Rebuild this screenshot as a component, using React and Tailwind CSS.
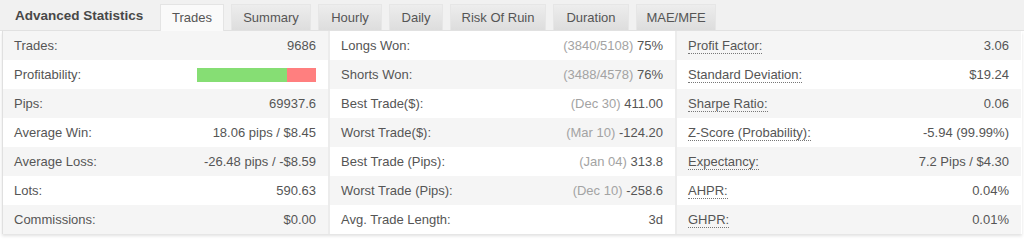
import React from 'react';

const tabs = [
  { name: 'Trades', w: 'w-[64px]', active: true },
  { name: 'Summary', w: 'w-[80px]' },
  { name: 'Hourly', w: 'w-[64px]' },
  { name: 'Daily', w: 'w-[54px]' },
  { name: 'Risk Of Ruin', w: 'w-[96px]' },
  { name: 'Duration', w: 'w-[76px]' },
  { name: 'MAE/MFE', w: 'w-[80px]' },
];

const col1 = [
  ['Trades:', '9686'],
  ['Profitability:', 'bar'],
  ['Pips:', '69937.6'],
  ['Average Win:', '18.06 pips / $8.45'],
  ['Average Loss:', '-26.48 pips / -$8.59'],
  ['Lots:', '590.63'],
  ['Commissions:', '$0.00'],
];

const col2 = [
  ['Longs Won:', '(3840/5108)', '75%'],
  ['Shorts Won:', '(3488/4578)', '76%'],
  ['Best Trade($):', '(Dec 30)', '411.00'],
  ['Worst Trade($):', '(Mar 10)', '-124.20'],
  ['Best Trade (Pips):', '(Jan 04)', '313.8'],
  ['Worst Trade (Pips):', '(Dec 10)', '-258.6'],
  ['Avg. Trade Length:', '', '3d'],
];

const col3 = [
  ['Profit Factor:', '3.06'],
  ['Standard Deviation:', '$19.24'],
  ['Sharpe Ratio:', '0.06'],
  ['Z-Score (Probability):', '-5.94 (99.99%)'],
  ['Expectancy:', '7.2 Pips / $4.30'],
  ['AHPR:', '0.04%'],
  ['GHPR:', '0.01%'],
];

function Row({ shade, children }) {
  return (
    <div className={`h-[29px] flex items-center justify-between pl-[11px] pr-[12px] ${shade ? 'bg-[#f5f5f5]' : 'bg-white'}`}>
      {children}
    </div>
  );
}

export default function App() {
  return (
    <div className="w-[1024px] h-[243px] bg-white font-['Liberation_Sans',sans-serif] text-[13px] text-[#555]">
      {/* header with tabs */}
      <div className="h-[31px] bg-[#f1f1f1] border-b border-[#e2e2e2] flex items-end">
        <div className="w-[160px] self-center pl-[15px] pt-[2px] font-bold text-[13.5px] text-[#484848]">Advanced Statistics</div>
        <div className="flex items-end gap-[7px] -mb-px">
          {tabs.map((t) =>
            t.active ? (
              <div key={t.name} className={`${t.w} h-[27px] flex items-center justify-center bg-[#fafafa] border border-b-0 border-[#e4e4e4] text-[#555] pb-[1px]`}>
                {t.name}
              </div>
            ) : (
              <div key={t.name} className={`${t.w} h-[26px] mb-px flex items-center justify-center bg-gradient-to-b from-[#ededed] to-[#dddddd] border border-b-0 border-[#e6e6e6] text-[#555]`}>
                {t.name}
              </div>
            )
          )}
        </div>
      </div>

      {/* stats panel */}
      <div className="mx-[2px] grid grid-cols-[327px_347px_344px] border-l border-[#e0e0e0] shadow-[0_2px_3px_rgba(0,0,0,0.12)]">
        <div className="border-r-[2px] border-[#ececec]">
          {col1.map(([k, v], i) => (
            <Row key={k} shade={i % 2 === 0}>
              <span>{k}</span>
              {v === 'bar' ? (
                <div className="flex w-[119px] h-[14px]">
                  <div className="w-[90px] bg-[#86de74]"></div>
                  <div className="flex-1 bg-[#ff7f7f]"></div>
                </div>
              ) : (
                <span>{v}</span>
              )}
            </Row>
          ))}
        </div>
        <div className="border-r-[2px] border-[#ececec]">
          {col2.map(([k, p, v], i) => (
            <Row key={k} shade={i % 2 === 1}>
              <span>{k}</span>
              <span>
                {p && <span className="text-[#a3a3a3]">{p} </span>}
                {v}
              </span>
            </Row>
          ))}
        </div>
        <div>
          {col3.map(([k, v], i) => (
            <Row key={k} shade={i % 2 === 0}>
              <span className="border-b border-dotted border-[#777] leading-[15px]">{k}</span>
              <span>{v}</span>
            </Row>
          ))}
        </div>
      </div>
    </div>
  );
}
